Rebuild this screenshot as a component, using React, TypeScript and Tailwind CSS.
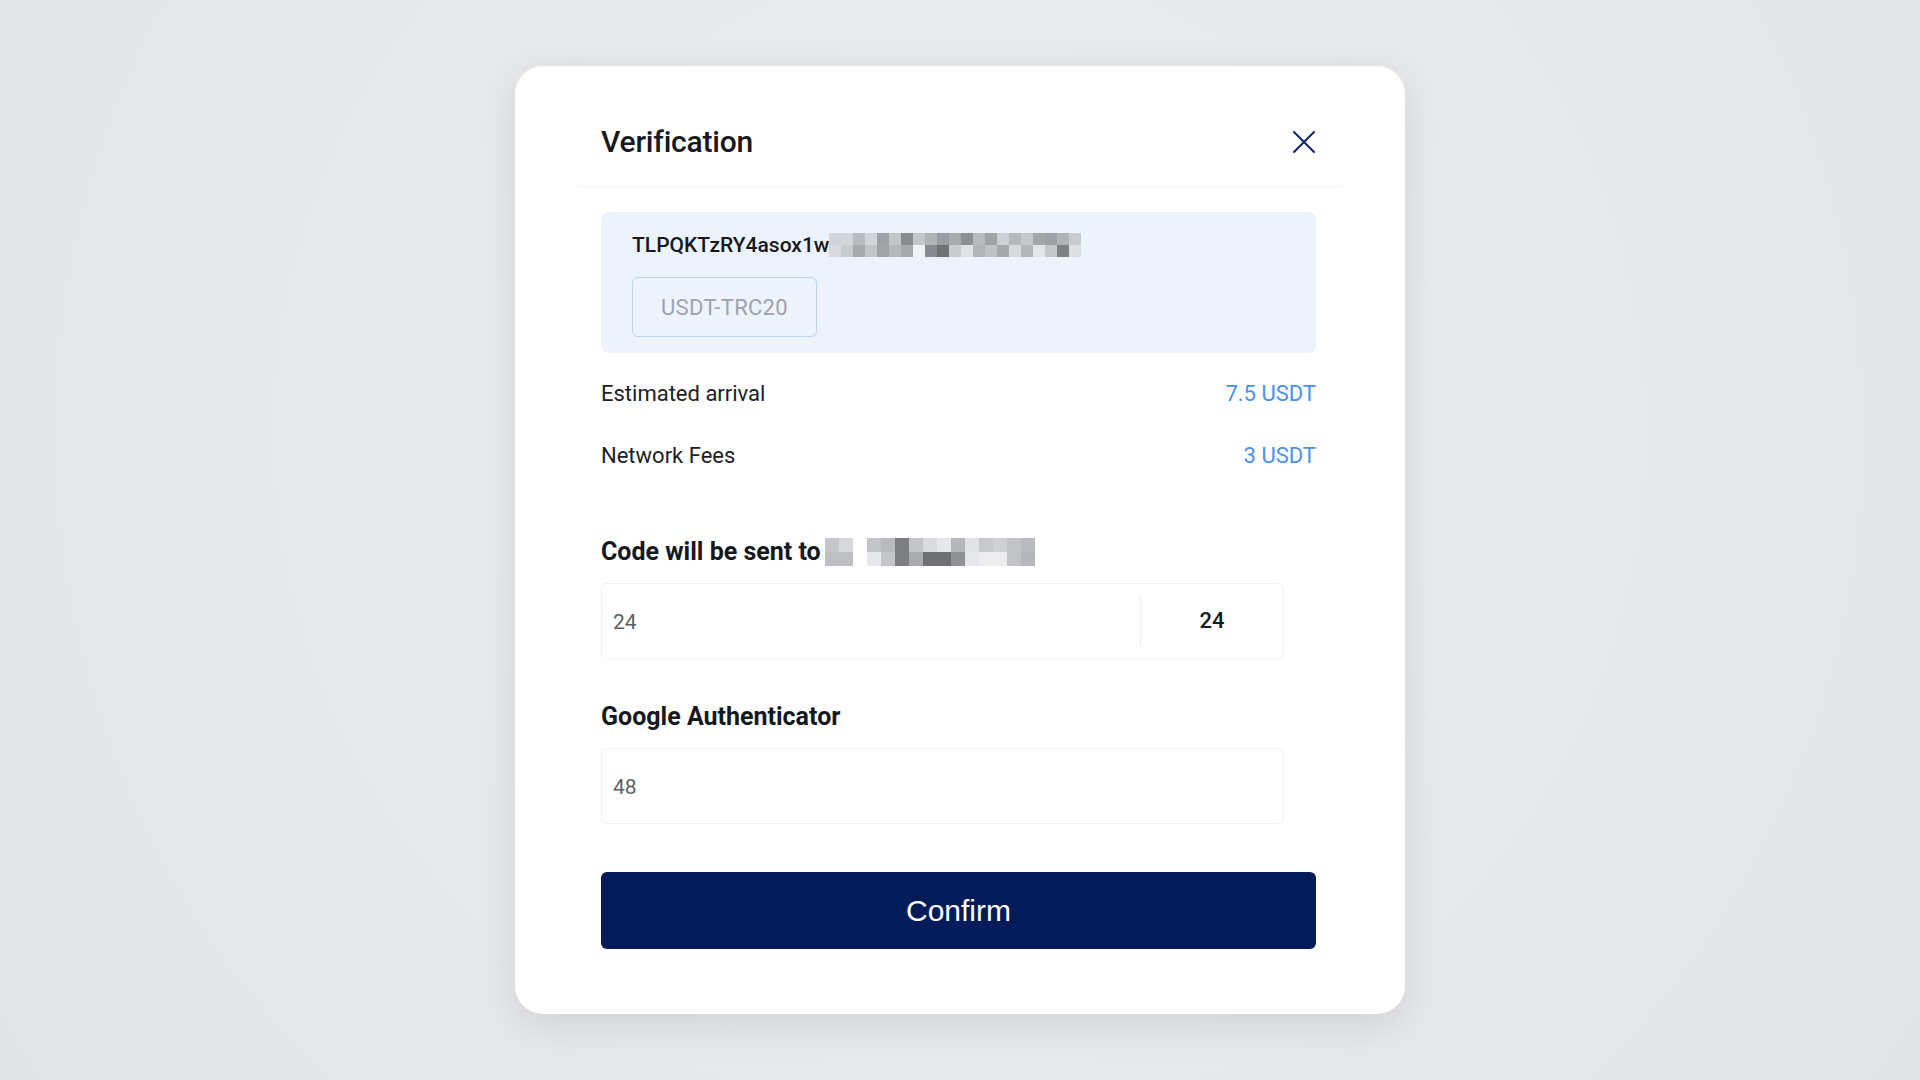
import React from 'react';

// pixelated mosaic used to hide private data
const addrCells = [
  ['#d3d5da', '#d3d5da', '#b9bbc0', '#d3d5da', '#9fa1a6', '#c4c6ca', '#8a8c90', '#c4c6ca', '#b1b3b7', '#9a9ca1', '#a7a9ad', '#8d8f93', '#b8babe', '#a0a2a6', '#cdd0d4', '#b6b8bc', '#c6c8cc', '#a4a6aa', '#9fa1a6', '#b0b2b6', '#c9cbcf'],
  ['#d8dadf', '#c9cbcf', '#a8aaae', '#c2c4c8', '#a1a3a7', '#b6b8bc', '#a8aaae', '#f2f3f5', '#878a8e', '#6f7175', '#c9cbcf', '#e0e2e5', '#b2b4b8', '#c0c2c6', '#a6a8ac', '#d8dade', '#b4b6ba', '#e4e5e8', '#c5c7cb', '#7e8084', '#dcdee2'],
];

const codeCells = [
  ['#c4c6ca', '#d6d8dc', null, '#c3c5c9', '#b9bbbf', '#7c7e82', '#c3c5c9', '#d9dbdf', '#e6e7ea', '#b4b6ba', '#e2e3e6', '#c7c9cd', '#cfd1d5', '#c2c4c8', '#b9bbbf'],
  ['#bdbfc3', '#bdbfc3', null, '#e6e7ea', '#c4c6ca', '#7c7e82', '#a9abaf', '#6e7074', '#6e7074', '#8f9195', '#e6e7ea', '#ededef', '#ededef', '#c1c3c7', '#b4b6ba'],
];

const Mosaic = ({ cells, cell }: { cells: (string | null)[][]; cell: number }) => (
  <div className="flex flex-col">
    {cells.map((row, r) => (
      <div key={r} className="flex">
        {row.map((c, i) => (
          <div
            key={i}
            style={{ width: cell, height: cell, backgroundColor: c ?? 'transparent' }}
          />
        ))}
      </div>
    ))}
  </div>
);

const din = { fontFamily: 'Roboto, "Noto Sans", sans-serif' };

export default function App() {
  return (
    <div className="w-full h-[1080px] bg-[#e5e7ea] bg-[radial-gradient(circle_at_50%_40%,#eceef0,#e2e4e7)] flex items-center justify-center">
      <div
        style={din}
        className="w-[890px] h-[948px] bg-white rounded-[28px] shadow-[0_10px_40px_rgba(0,0,0,0.10)] flex flex-col"
      >
        {/* header */}
        <div className="mx-[63px] h-[121px] border-b border-[#f1f2f4] flex items-center justify-between pl-[23px] pr-[26px] pt-[31px]">
          <h1 className="text-[30px] font-medium text-[#15181d] tracking-[-0.2px]">Verification</h1>
          <button className="w-6 h-6 flex items-center justify-center text-[#0b2566]">
            <svg width="24" height="24" viewBox="0 0 24 24" fill="none" stroke="currentColor" strokeWidth="2" strokeLinecap="round">
              <path d="M2 2 L22 22 M22 2 L2 22" />
            </svg>
          </button>
        </div>

        <div className="pl-[86px] pr-[89px] flex flex-col">
          {/* address card */}
          <div className="mt-[25px] h-[141px] rounded-lg bg-[#edf3fd] pl-[31px] pt-[21px] flex flex-col items-start">
            <div className="flex items-center h-[24px]">
              <span className="text-[21px] font-medium text-[#15181d] leading-none">TLPQKTzRY4asox1w</span>
              <Mosaic cells={addrCells} cell={12} />
            </div>
            <div className="mt-[20px] w-[185px] h-[60px] rounded-md border border-[#bcd3f6] bg-[#eef4fd] flex items-center justify-center text-[22px] text-[#9ea3ab] tracking-[0.3px]">
              USDT-TRC20
            </div>
          </div>

          {/* details */}
          <div className="mt-[9px] flex flex-col text-[22px]">
            <div className="h-[62px] flex items-center justify-between">
              <span className="text-[#1d2127]">Estimated arrival</span>
              <span className="text-[#4b8ff2]">7.5 USDT</span>
            </div>
            <div className="h-[62px] flex items-center justify-between">
              <span className="text-[#1d2127]">Network Fees</span>
              <span className="text-[#4b8ff2]">3 USDT</span>
            </div>
          </div>

          {/* email code */}
          <div className="mt-[51px] h-[30px] flex items-center">
            <span className="text-[25px] font-bold text-[#15181d] mr-[4px]">Code will be sent to</span>
            <Mosaic cells={codeCells} cell={14} />
          </div>
          <div className="mt-[16px] w-[683px] h-[76px] rounded-md border border-[#f0f1f3] flex items-center">
            <span className="flex-1 pl-[11px] pt-[3px] text-[21px] text-[#5b5f66]">24</span>
            <div className="w-px h-[49px] bg-[#eeeff1]" />
            <span className="w-[142px] text-center text-[22px] font-medium text-[#15181d] -mt-[1px]">24</span>
          </div>

          {/* google authenticator */}
          <div className="mt-[43px] h-[30px] flex items-center">
            <span className="text-[25px] font-bold text-[#15181d]">Google Authenticator</span>
          </div>
          <div className="mt-[16px] w-[683px] h-[76px] rounded-md border border-[#f0f1f3] flex items-center">
            <span className="pl-[11px] pt-[3px] text-[21px] text-[#5b5f66]">48</span>
          </div>

          <button
            style={{ fontFamily: '"Liberation Sans", Arial, sans-serif' }}
            className="mt-[48px] h-[77px] rounded-md bg-[#031c59] text-white text-[30px]"
          >
            Confirm
          </button>
        </div>
      </div>
    </div>
  );
}
